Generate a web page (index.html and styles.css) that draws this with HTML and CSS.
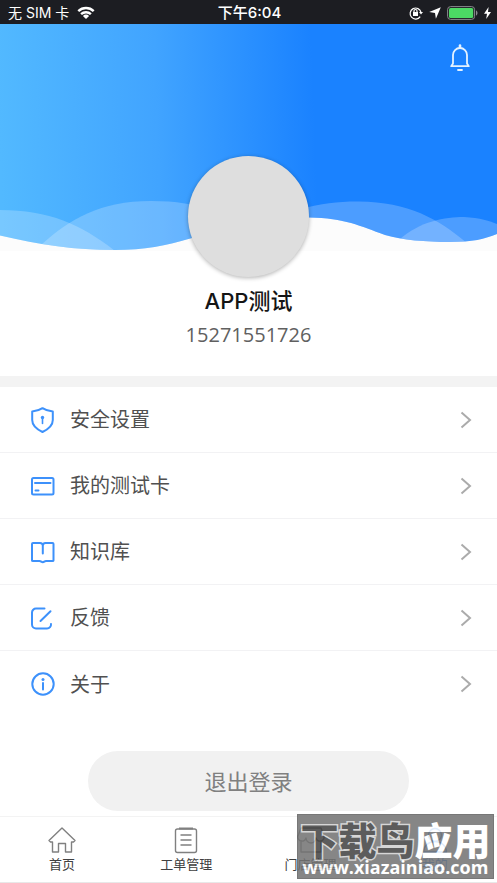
FILE: index.html
```html
<!DOCTYPE html>
<html lang="zh-CN">
<head>
<meta charset="utf-8">
<meta name="viewport" content="width=device-width, initial-scale=1">
<title>我的</title>
<link rel="stylesheet" href="styles.css">
</head>
<body>
<div class="status-bar">
  <div class="status-left">
    <span>无 SIM 卡</span>
    <svg width="18" height="14" viewBox="0 0 18 14" fill="none" stroke="#fff" stroke-width="2.4">
      <path d="M1.3 5.2a11 11 0 0 1 15.4 0M4.1 8.2a7 7 0 0 1 9.8 0"/>
      <path d="M9 13 5.9 9.9a4.4 4.4 0 0 1 6.2 0z" fill="#fff" stroke="none"/>
    </svg>
  </div>
  <time class="status-time">下午6:04</time>
  <div class="status-right">
    <svg width="14" height="14" viewBox="0 0 14 14" fill="none" stroke="#fff" stroke-width="1.2">
      <path d="M11.2 10.6A5.5 5.5 0 1 1 12 6.4"/>
      <path d="M10 6h4l-2 2.6z" fill="#fff" stroke="none"/>
      <rect x="4" y="6" width="5" height="4" fill="#fff" stroke="none"/>
      <path d="M5 6.200V5a1.500 1.500 0 0 1 3 0v1.200"/>
    </svg>
    <svg width="12" height="12" viewBox="0 0 12 12"><path d="M11.800.2 6.900 11.800 6 6 .2 5.100z" fill="#fff"/></svg>
    <svg width="31" height="14" viewBox="0 0 31 14">
      <rect x=".6" y=".6" width="27" height="12.8" rx="3" fill="none" stroke="#8b8b8f"/>
      <rect x="2" y="2" width="24.2" height="10" rx="1.6" fill="#4cd964"/>
      <path d="M29 4.500c2 .6 2 4.400 0 5z" fill="#8b8b8f"/>
    </svg>
    <svg width="7" height="12" viewBox="0 0 7 12"><path d="M4.600 0 0 6.700h3L2.200 12 7 5H4z" fill="#fff"/></svg>
  </div>
</div>

<header class="hero">
  <svg class="hero-waves" viewBox="0 0 497 227" preserveAspectRatio="none" aria-hidden="true">
    <defs>
      <linearGradient id="sky" gradientUnits="userSpaceOnUse" x1="0" y1="125" x2="315" y2="115">
        <stop offset="0" stop-color="#52b9ff"/>
        <stop offset=".5" stop-color="#41a4ff"/>
        <stop offset="1" stop-color="#1a82ff"/>
      </linearGradient>
      <clipPath id="sea"><path d="M0 0H497V210C485 215 472 218 450 218C425 218 403 216 385 211C360 202 345 194 309 193.500C260 194 230 204 192 214C165 222 145 226 115 226C75 226 40 221 0 211.500Z"/></clipPath>
    </defs>
    <rect width="497" height="227" fill="#fcfcfc"/>
    <g clip-path="url(#sea)">
      <rect width="497" height="227" fill="url(#sky)"/>
      <g fill="#fff" fill-opacity=".22">
        <path d="M0 186C50 186 82 201 115 227H0Z"/>
        <path d="M42 220C70 195 100 177 151 177C210 177 240 195 270 227H36Z"/>
        <path d="M240 220C270 190 315 177 359 177.500C410 178 440 196 468 220V227H240Z"/>
        <path d="M399 216C420 197 445 193 464 193C480 194 490 197 497 200V227H390Z"/>
      </g>
    </g>
  </svg>
  <button class="bell" type="button" aria-label="消息">
    <svg width="22" height="28" viewBox="0 0 22 28" fill="none" stroke="#e4f2ff" stroke-width="1.800" stroke-linecap="round" stroke-linejoin="round">
      <path d="M4 19.500V11a7 7 0 0 1 14 0v8.500l1.800 2.700H2.200zM9 26h4"/>
      <path d="M11 1.600v2" stroke-width="2.600"/>
    </svg>
  </button>
</header>

<main>
  <section class="profile">
    <div class="avatar"></div>
    <h1 class="name">APP测试</h1>
    <p class="phone">15271551726</p>
  </section>

  <nav class="menu" aria-label="设置">
    <a class="menu-row" href="#security">
      <svg class="menu-icon" viewBox="0 0 24 26"><path d="M11.500 1.200C8.500 3.200 5.500 4.200 1.200 4.600V13c0 5.500 4 9 10.300 12 6.300-3 10.300-6.500 10.300-12V4.600C17.500 4.200 14.500 3.200 11.500 1.200z"/><path d="M11.500 11v5.500" stroke-width="1.600"/><circle class="dot" cx="11.500" cy="10.500" r="1.700"/></svg>
      <span>安全设置</span>
      <svg class="chevron" viewBox="0 0 12 18"><path d="m1.500 1.500 8.500 7.500-8.500 7.500"/></svg>
    </a>
    <a class="menu-row" href="#cards">
      <svg class="menu-icon" viewBox="0 0 24 26"><rect x="1" y="5" width="21.500" height="16.500" rx="1.500"/><path d="M4 10h15.500M4.500 17.500h3"/></svg>
      <span>我的测试卡</span>
      <svg class="chevron" viewBox="0 0 12 18"><path d="m1.500 1.500 8.500 7.500-8.500 7.500"/></svg>
    </a>
    <a class="menu-row" href="#knowledge">
      <svg class="menu-icon" viewBox="0 0 24 26"><path d="M11.800 14.500V6.500C11.800 4.500 10.500 4 9 4H2Q1 4 1 5V21.500Q1 22 2 22H8.500C10 22 10.500 23.300 11.800 23.300S13.500 22 15 22H21.500Q22.500 22 22.500 21.500V5Q22.500 4 21.500 4H14.500C13 4 11.800 4.500 11.800 6.500"/></svg>
      <span>知识库</span>
      <svg class="chevron" viewBox="0 0 12 18"><path d="m1.500 1.500 8.500 7.500-8.500 7.500"/></svg>
    </a>
    <a class="menu-row" href="#feedback">
      <svg class="menu-icon" viewBox="0 0 24 26"><path d="M13.500 3.500H5A4 4 0 0 0 1 7.500V19.500A4 4 0 0 0 5 23.500H16A4 4 0 0 0 20 19M9.500 16 19.500 6.200"/></svg>
      <span>反馈</span>
      <svg class="chevron" viewBox="0 0 12 18"><path d="m1.500 1.500 8.500 7.500-8.500 7.500"/></svg>
    </a>
    <a class="menu-row" href="#about">
      <svg class="menu-icon" viewBox="0 0 24 26"><circle cx="12" cy="13" r="10.700"/><path d="M12 12v6.500"/><circle class="dot" cx="12" cy="8.500" r="1.500"/></svg>
      <span>关于</span>
      <svg class="chevron" viewBox="0 0 12 18"><path d="m1.500 1.500 8.500 7.500-8.500 7.500"/></svg>
    </a>
  </nav>

  <div class="actions">
    <button class="logout" type="button">退出登录</button>
  </div>
</main>

<footer class="bottom">
  <nav class="tabs" aria-label="主导航">
    <a class="tab" href="#home">
      <svg class="tab-icon" viewBox="0 0 28 28"><path d="M14 2 1 14.500 2.500 16H4.500V26H10.500V17.500H17.500V26H23.500V16H25.500L27 14.500Z"/></svg>
      <span>首页</span>
    </a>
    <a class="tab" href="#orders">
      <svg class="tab-icon" viewBox="0 0 28 28"><rect x="3.500" y="3" width="21" height="23.500" rx="2"/><path d="M8.500 9h11M8.500 14h11M8.500 19h11"/><path d="M7 2.500h14" stroke-width="2"/></svg>
      <span>工单管理</span>
    </a>
    <a class="tab" href="#stores">
      <svg class="tab-icon" viewBox="0 0 28 28"><path d="M4 2h20l3 8a4 4 0 0 1-8 2 5 5 0 0 1-10 0 4 4 0 0 1-8-2zM4 14v12h20V14"/></svg>
      <span>门店管理</span>
    </a>
    <a class="tab tab-active" href="#me" aria-current="page">
      <svg class="tab-icon" viewBox="0 0 28 28"><circle cx="14" cy="9" r="6.500"/><path d="M2.500 26a11.500 10.500 0 0 1 23 0z"/></svg>
      <span>我的</span>
    </a>
  </nav>
  <div class="watermark">
    <div class="watermark-name"><span class="watermark-dark">下载鸟</span>应用</div>
    <div class="watermark-url">www.xiazainiao.com</div>
  </div>
</footer>
</body>
</html>
```
FILE: styles.css
```css
* {
  box-sizing: border-box;
}

body {
  margin: 0;
  min-height: 100vh;
  display: flex;
  flex-direction: column;
  background: #fff;
  color: #505050;
  font-family: "Open Sans", "Noto Sans CJK SC", sans-serif;
}

a {
  color: inherit;
  text-decoration: none;
}

button {
  border: 0;
  padding: 0;
  font: inherit;
}

svg {
  display: block;
  flex: none;
}

.status-bar {
  display: grid;
  grid-template-columns: 1fr auto 1fr;
  align-items: center;
  height: 24px;
  padding: 2px 6px 0 8px;
  background: #1c1d22;
  color: #fff;
  font-family: Inter, "Noto Sans CJK SC", sans-serif;
  font-size: 14px;
  line-height: 22px;
}

.status-left,
.status-right {
  display: flex;
  align-items: center;
  gap: 8px;
}

.status-right {
  justify-content: flex-end;
  gap: 6px;
}

.status-time {
  font-size: 15px;
  font-weight: 500;
}

.hero {
  position: relative;
  display: flex;
  justify-content: flex-end;
  align-items: flex-start;
  height: 227px;
  padding: 20px 26px;
}

.hero-waves {
  position: absolute;
  inset: 0;
  width: 100%;
  height: 100%;
}

.bell {
  position: relative;
  background: none;
}

.profile {
  position: relative;
  display: flex;
  flex-direction: column;
  align-items: center;
  margin-top: -95px;
  padding-bottom: 26px;
}

.avatar {
  width: 121px;
  height: 121px;
  border-radius: 50%;
  background: #dedede;
  box-shadow: 0 1px 4px rgba(0, 0, 0, 0.3);
}

.name {
  margin: 8px 0 0;
  color: #151515;
  font-family: Inter, "Noto Sans CJK SC", sans-serif;
  font-size: 22px;
  font-weight: 500;
  line-height: 32px;
}

.phone {
  margin: 3px 0 0;
  color: #606060;
  font-size: 20px;
  line-height: 30px;
}

.menu {
  border-top: 11px solid #f3f3f3;
}

.menu-row {
  display: flex;
  align-items: center;
  height: 66px;
  padding: 0 25px 0 31px;
  border-bottom: 1px solid #f2f2f4;
  font-size: 20px;
}

.menu-row:last-child {
  border-bottom: 0;
}

.menu-row span {
  flex: 1;
  margin-left: 15px;
  padding-bottom: 2px;
}

.menu-icon {
  width: 24px;
  height: 26px;
  fill: none;
  stroke: #3d91fb;
  stroke-width: 2;
  stroke-linecap: round;
  stroke-linejoin: round;
}

.menu-icon .dot {
  fill: #3d91fb;
  stroke: none;
}

.chevron {
  width: 12px;
  height: 18px;
  fill: none;
  stroke: #ababab;
  stroke-width: 2;
}

.actions {
  display: flex;
  padding: 34px 88px 5px;
}

.logout {
  flex: 1;
  height: 60px;
  padding-bottom: 3px;
  border-radius: 30px;
  background: #f1f1f1;
  color: #808080;
  font-size: 22px;
}

.bottom {
  position: relative;
  margin-top: auto;
}

.tabs {
  display: grid;
  grid-template-columns: repeat(4, 1fr);
  height: 67px;
  padding-top: 9px;
  border-top: 1px solid #f3f3f3;
  border-bottom: 1px solid #e8e8e8;
  color: #404040;
  font-size: 13px;
  line-height: 20px;
}

.tab {
  display: flex;
  flex-direction: column;
  align-items: center;
}

.tab-icon {
  width: 28px;
  height: 28px;
  fill: none;
  stroke: #808080;
  stroke-width: 1.4;
  stroke-linejoin: round;
}

.tab-active {
  color: #2d82f0;
}

.tab-active .tab-icon {
  stroke: #2d82f0;
}

.watermark {
  position: absolute;
  right: 3px;
  bottom: 4px;
  width: 197px;
  height: 65px;
  border: 1px solid #606060;
  background: #727272;
  color: #fff;
  opacity: 0.85;
  text-align: center;
  white-space: nowrap;
}

.watermark-name {
  height: 42px;
  font-size: 38px;
  font-weight: 900;
  line-height: 50px;
}

.watermark-dark {
  color: #404040;
  -webkit-text-stroke: 3px #d0d0d0;
  paint-order: stroke fill;
}

.watermark-url {
  font-size: 18px;
  font-weight: 700;
  line-height: 20px;
}
```
